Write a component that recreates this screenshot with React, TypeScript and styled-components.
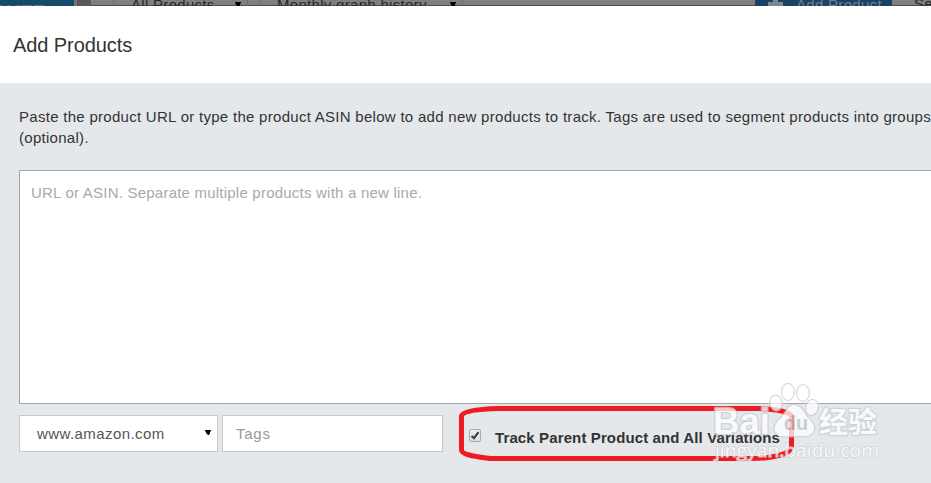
import React from "react";
import styled, { createGlobalStyle } from "styled-components";

const GlobalStyle = createGlobalStyle`
  * { box-sizing: border-box; }
  html, body { margin: 0; overflow: hidden; }
  body { font-family: "Liberation Sans", Arial, sans-serif; color: #333; background: #e4e8eb; }
`;

const Page = styled.div`
  position: relative;
  width: 931px;
  height: 483px;
  overflow: hidden;
  display: flex;
  flex-direction: column;
`;

const Backdrop = styled.div`
  flex: none;
  display: flex;
  height: 6px;
  overflow: hidden;
  background: linear-gradient(#7f7f7f 5px, #4f4a4c 5px);
  font-size: 15px;
  letter-spacing: 0.3px;
  line-height: 18px;
  color: #282828;
  white-space: nowrap;
`;

const Brand = styled.div`
  flex: none;
  width: 74px;
  height: 6px;
  background: #154a6b;
  color: #5c7688;
  font-size: 19px;
  font-weight: bold;
  line-height: 22px;
  padding-top: 1px;
  text-indent: -22px;
`;

const BrandEdge = styled.div`
  flex: none;
  width: 17px;
  background: #595959;
  border-left: 3px solid #747474;
`;

const Filter = styled.div<{ $width: number; $gap: number }>`
  flex: none;
  display: flex;
  justify-content: space-between;
  width: ${(p) => p.$width}px;
  height: 24px;
  margin-left: ${(p) => p.$gap}px;
  padding: 0 5px 0 17px;
  border: solid #6a6a6a;
  border-width: 0 1px;
`;

const FilterText = styled.span`
  margin-top: -4px;
`;

const Arrow = styled.svg`
  flex: none;
  display: block;
  width: 7px;
  height: 6px;
  fill: #000;
`;

const FilterArrow = styled(Arrow)`
  margin-top: 2px;
`;

const AddButton = styled.div`
  flex: none;
  display: flex;
  width: 137px;
  height: 20px;
  margin-left: 292px;
  padding-left: 13px;
  background: #194266;
  color: #717f8b;
`;

const PlusIcon = styled.svg`
  width: 15px;
  height: 15px;
  margin-top: -3px;
  margin-right: 13px;
  fill: #7e878e;
`;

const SearchLabel = styled.span`
  margin: -5px 0 0 22px;
`;

const Header = styled.header`
  flex: none;
  height: 78px;
  padding: 27px 13px 0;
  background: #fff;
  border-bottom: 1px solid #e2e5e7;
`;

const Title = styled.h1`
  margin: 0;
  font-size: 20px;
  line-height: 24px;
  font-weight: normal;
  letter-spacing: -0.08px;
`;

const Body = styled.main`
  flex: none;
  width: 1000px;
  height: 399px;
  padding: 22px 19px 0;
  background: #e4e8eb;
`;

const Intro = styled.p`
  margin: 0;
  height: 64px;
  font-size: 15px;
  line-height: 21px;
  letter-spacing: 0.285px;
  white-space: nowrap;
`;

const UrlArea = styled.div`
  height: 234px;
  padding: 13px 11px;
  border: 1px solid #a5a5a5;
  background: #fff;
  color: #a9a9a9;
  font-size: 15px;
  line-height: 18px;
  letter-spacing: 0.22px;
`;

const Controls = styled.div`
  display: flex;
  align-items: center;
  height: 37px;
  margin-top: 11px;
`;

const Field = styled.div<{ $width: number; $muted?: boolean }>`
  display: flex;
  align-items: center;
  justify-content: space-between;
  width: ${(p) => p.$width}px;
  height: 37px;
  margin-right: 4px;
  padding: 0 5px 0 ${(p) => (p.$muted ? 13 : 17)}px;
  border: 1px solid #c8c8c8;
  background: #fff;
  color: ${(p) => (p.$muted ? "#999" : "#555")};
  font-size: 15px;
  letter-spacing: ${(p) => (p.$muted ? 0.75 : 0.42)}px;
`;

const FieldArrow = styled(Arrow)`
  margin-bottom: 2px;
`;

const Variations = styled.div`
  display: flex;
  align-items: center;
  margin-left: 22px;
  padding-top: 8px;
`;

const CheckBox = styled.span`
  display: block;
  width: 12px;
  height: 13px;
  margin: -1px 14px 4px 0;
  border: 1px solid #aaa;
  border-radius: 2px;
  background: linear-gradient(#eee, #dedede);

  svg { display: block; width: 10px; height: 11px; }
`;

const Label = styled.span`
  font-size: 15px;
  line-height: 18px;
  font-weight: bold;
  letter-spacing: 0.12px;
`;

const Overlay = styled.svg`
  position: absolute;
  inset: 0;
  width: 931px;
  height: 483px;
  pointer-events: none;
`;

const Triangle = () => <path d="M0 0H6V1L5 2V3L4 5H3L1 3V2L0 1Z" />;

const Watermark = () => (
  <g opacity=".75" fill="#fff" stroke="#c9cccf" paintOrder="stroke" strokeLinejoin="round">
    <g strokeWidth="2.4">
      <ellipse cx="788" cy="392" rx="5.8" ry="8" />
      <ellipse cx="803" cy="393" rx="5.8" ry="7.8" />
      <ellipse cx="776" cy="403" rx="5.6" ry="7.4" transform="rotate(-10 776 403)" />
      <ellipse cx="812" cy="407.5" rx="5.6" ry="7.6" transform="rotate(12 812 407.500)" />
      <path d="M794 405C801 405 803 412 808 418C813 423 816 427 813 432C810 437 803 436 795 436C787 436 780 438 776 433C772 428 777 421 782 417C787 412 787 405 794 405Z" />
    </g>
    <text x="784" y="430" fill="#c0c3c6" stroke="none" fontFamily="Liberation Sans, Arial, sans-serif" fontWeight="bold" fontSize="20" textLength="24" lengthAdjust="spacingAndGlyphs">du</text>
    <text x="713" y="434" strokeWidth="2.5" fontFamily="Liberation Sans, Arial, sans-serif" fontWeight="bold" fontSize="36" textLength="57" lengthAdjust="spacingAndGlyphs">Bai</text>
    <text x="819" y="433" strokeWidth="2.500" fontFamily="Noto Sans CJK SC, sans-serif" fontWeight="bold" fontSize="29" textLength="58">经验</text>
    <text x="715" y="457" strokeWidth="1.6" fontFamily="Open Sans, sans-serif" fontSize="19" textLength="164" lengthAdjust="spacingAndGlyphs">jingyan.baidu.com</text>
  </g>
);

export default function App() {
  return (
    <Page>
      <GlobalStyle />
      <Backdrop>
        <Brand>COVER</Brand>
        <BrandEdge />
        <Filter $width={135} $gap={22}>
          <FilterText>All Products</FilterText>
          <FilterArrow viewBox="0 0 7 6"><Triangle /></FilterArrow>
        </Filter>
        <Filter $width={204} $gap={11}>
          <FilterText>Monthly graph history</FilterText>
          <FilterArrow viewBox="0 0 7 6"><Triangle /></FilterArrow>
        </Filter>
        <AddButton>
          <PlusIcon viewBox="0 0 15 15"><path d="M5 0H10V5H15V10H10V15H5V10H0V5H5Z" /></PlusIcon>
          <FilterText>Add Product</FilterText>
        </AddButton>
        <SearchLabel>Search</SearchLabel>
      </Backdrop>
      <Header>
        <Title>Add Products</Title>
      </Header>
      <Body>
        <Intro>
          Paste the product URL or type the product ASIN below to add new products to track. Tags are used to segment products into groups
          <br />
          (optional).
        </Intro>
        <UrlArea>URL or ASIN. Separate multiple products with a new line.</UrlArea>
        <Controls>
          <Field $width={199}>
            www.amazon.com
            <FieldArrow viewBox="0 0 7 6"><Triangle /></FieldArrow>
          </Field>
          <Field $width={221} $muted>Tags</Field>
          <Variations>
            <CheckBox>
              <svg viewBox="0 0 10 11"><path d="M1.5 6L4 8.2L8.5 2.2" fill="none" stroke="#404040" strokeWidth="2.2" /></svg>
            </CheckBox>
            <Label>Track Parent Product and All Variations</Label>
          </Variations>
        </Controls>
      </Body>
      <Overlay viewBox="0 0 931 483">
        <path
          d="M461.5 416C463 411 479 409 499 408.5H760C776 409.5 791 411 791.5 417V447C790 453 778 458.5 750 458.5H490C476 456.5 461.5 455 461.5 450Z"
          fill="none"
          stroke="#ed1c24"
          strokeWidth="5"
        />
        <Watermark />
      </Overlay>
    </Page>
  );
}
